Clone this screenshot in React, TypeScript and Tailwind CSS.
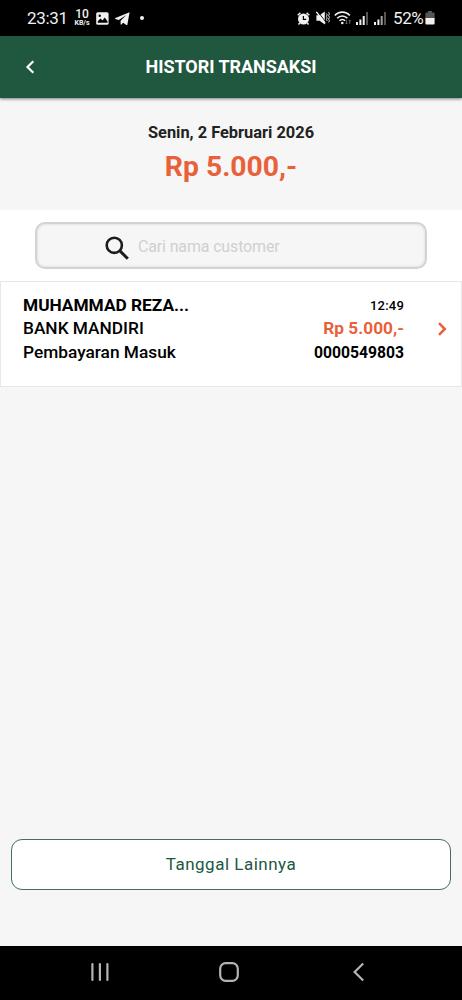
interface Transaction {
    name: string;
    bank: string;
    type: string;
    time: string;
    amount: string;
    reference: string;
}

const transactions: Transaction[] = [
    {
        name: "MUHAMMAD REZA...",
        bank: "BANK MANDIRI",
        type: "Pembayaran Masuk",
        time: "12:49",
        amount: "Rp 5.000,-",
        reference: "0000549803",
    },
];

function SignalIcon({ bars, className }: { bars: number; className?: string }) {
    return (
        <svg viewBox="0 0 12 13" className={className} fill="#f0f0f0">
            <rect x="0" y="10" width="2" height="3" />
            <rect x="3.4" y="7.5" width="2" height="5.5" />
            <rect x="6.7" y="4" width="2" height="9" fill={bars > 2 ? "#f0f0f0" : "#a0a0a0"} />
            <rect x="10" y="0" width="2" height="13" fill="#555" />
        </svg>
    );
}

function StatusBar() {
    return (
        <div className="flex h-9 shrink-0 items-center justify-between bg-black pl-[27px] pr-[27px] text-[#f0f0f0]">
            <div className="flex items-center">
                <span className="w-[47px] text-[17px] leading-none tracking-[-0.3px]">23:31</span>
                <div className="flex w-4 flex-col items-center font-medium">
                    <span className="text-[12px] leading-[11px]">10</span>
                    <span className="text-[7px] font-bold leading-[7px]">KB/s</span>
                </div>
                <svg viewBox="0 0 13 13" className="ml-1.5 h-[13px] w-[13px]">
                    <rect width="12.4" height="12.6" x="0.2" y="0.2" rx="1.6" fill="#f0f0f0" />
                    <path d="M1.8 9.3 4.5 6.6l2 2 2.2-3 2.8 3.7v1.4H1.8z" fill="#000" />
                    <circle cx="3.7" cy="3.7" r="1.2" fill="#000" />
                </svg>
                <svg viewBox="0 0 15 13" className="ml-1.5 h-[13px] w-[15px]" fill="#f0f0f0">
                    <path d="M14.6.3.4 6.1c-.5.2-.5.7 0 .9l3.4 1.1L11.3 3 5.6 8.8v3.4c0 .5.5.6.8.3l1.8-1.8 3.1 2.2c.5.3 1 .1 1.1-.5z" />
                </svg>
                <span className="ml-[10px] h-1 w-1 rounded-full bg-[#f0f0f0]" />
            </div>
            <div className="flex items-center">
                <svg viewBox="0 0 13 13" className="h-[13px] w-[13px]">
                    <circle cx="6.5" cy="7" r="5.5" fill="#f0f0f0" />
                    <path d="M.7 3.2 3.4.8M12.3 3.2 9.6.8M2.7 11 1.5 12.4M10.3 11l1.2 1.4" stroke="#f0f0f0" strokeWidth="1.5" />
                    <path d="M6.4 4v3.4h2.8" stroke="#000" strokeWidth="1.2" fill="none" />
                </svg>
                <svg viewBox="0 0 14 14" className="ml-1.5 h-[14px] w-[14px]">
                    <path d="M.4 4.200h3.200L8.800.6v12.800L3.600 9.800H.4z" fill="#f0f0f0" />
                    <path d="m1.400 .2 8.600 11" stroke="#000" strokeWidth="0.900" />
                    <path d="m.4.8 8.800 11.600" stroke="#f0f0f0" strokeWidth="1.400" />
                    <path d="M10.400 2.500l.8 1.400-.8 1.500.8 1.500-.8 1.500.8 1.500M12.600 1.200l.8 1.700-.8 1.700.8 1.700-.8 1.700.8 1.700-.8 1.700" stroke="#e0e0e0" strokeWidth="1" fill="none" />
                </svg>
                <svg viewBox="0 0 18 14" className="ml-1 h-[14px] w-[18px]" fill="none" stroke="#f0f0f0" strokeWidth="1.600">
                    <path d="M.8 4.600c4-4.600 11-4.600 15 0M3.200 7.300c2.800-3 7.400-3 10.200 0M5.500 9.800c1.600-1.700 4-1.700 5.600 0" />
                    <circle cx="8.300" cy="12" r="1.300" fill="#f0f0f0" stroke="none" />
                    <path d="M12.500 9v4M11.300 11.800l1.200 1.200 1.200-1.200M15.700 13V9M14.500 10.200 15.700 9l1.200 1.200" stroke="#777" strokeWidth="0.8" />
                </svg>
                <SignalIcon bars={3} className="ml-1 h-[13px] w-3" />
                <SignalIcon bars={2} className="ml-1.5 h-[13px] w-3" />
                <span className="ml-[7px] w-[32px] text-[17px] leading-none tracking-[-0.4px]">52%</span>
                <svg viewBox="0 0 10 14" className="h-[14px] w-[10px]">
                    <path d="M3 0h4v1.400h1.600q1 0 1 1V8H.4V2.400q0-1 1-1H3z" fill="#555" />
                    <path d="M.4 7h9.200v5.600q0 1-1 1H1.400q-1 0-1-1z" fill="#f0f0f0" />
                </svg>
            </div>
        </div>
    );
}

function Header() {
    return (
        <header className="z-10 grid h-[62px] shrink-0 grid-cols-[60px_1fr_60px] items-center bg-[#20573f] text-white shadow-[0_1px_3px_rgba(0,0,0,0.5)]">
            <button className="flex justify-center">
                <svg viewBox="0 0 10 14" className="h-[14px] w-[10px]" fill="none" stroke="currentColor" strokeWidth="2.200">
                    <path d="M8.300 1.200 2.500 7l5.800 5.800" />
                </svg>
            </button>
            <h1 className="text-center text-[18px] font-bold leading-6 tracking-[-0.05px]">HISTORI TRANSAKSI</h1>
        </header>
    );
}

function TransactionCard({ transaction }: { transaction: Transaction }) {
    return (
        <div className="flex h-[106px] border border-[#e8e8e8] bg-white pl-[22px] pt-3 text-black">
            <div className="flex-1 text-[17.300px] font-medium leading-[23.400px]">
                <p className="font-bold">{transaction.name}</p>
                <p>{transaction.bank}</p>
                <p>{transaction.type}</p>
            </div>
            <div className="text-right leading-[23.400px]">
                <p className="text-[13px] font-medium tracking-[0.2px]">{transaction.time}</p>
                <p className="text-[17.250px] font-bold text-[#e8613a]">{transaction.amount}</p>
                <p className="text-[15.700px] font-bold">{transaction.reference}</p>
            </div>
            <svg viewBox="0 0 10 14" className="ml-[33px] mr-[14px] mt-[28px] h-[14px] w-[10px]" fill="none" stroke="#e8613a" strokeWidth="2.500">
                <path d="M2 1.200 7.800 7 2 12.800" />
            </svg>
        </div>
    );
}

function NavigationBar() {
    return (
        <div className="flex h-[54px] shrink-0 items-center bg-black pb-[2px] pl-[90px] text-[#b4b4b4]">
            <svg viewBox="0 0 20 20" className="h-5 w-5" stroke="currentColor" strokeWidth="2.200" strokeLinecap="round">
                <path d="M2.400 2v16M9.900 2v16M17.400 2v16" />
            </svg>
            <svg viewBox="0 0 20 20" className="ml-[109px] h-5 w-5" fill="none" stroke="currentColor" strokeWidth="2.200">
                <rect x="1.200" y="1.200" width="17.600" height="17.600" rx="5.500" />
            </svg>
            <svg viewBox="0 0 12 20" className="ml-[113px] h-5 w-3" fill="none" stroke="currentColor" strokeWidth="2.200">
                <path d="M11.200 1.500 2.600 10l8.600 8.500" />
            </svg>
        </div>
    );
}

export default function App() {
    return (
        <div className="flex h-[1000px] w-[462px] flex-col overflow-hidden bg-[#f6f6f6] font-['Roboto',sans-serif]">
            <StatusBar />
            <Header />
            <section className="h-[112px] shrink-0 pt-[23px] text-center">
                <p className="text-[16.400px] font-bold leading-6 text-[#222]">Senin, 2 Februari 2026</p>
                <p className="text-[28.300px] font-bold leading-[43px] text-[#e8613a]">Rp 5.000,-</p>
            </section>
            <div className="h-[71px] shrink-0 bg-white px-[35px] pt-3">
                <label className="flex h-[47px] items-center rounded-[10px] border-2 border-[#d3d3d3] bg-[#f6f6f6] pl-[68px] shadow-[inset_0_0_3px_rgba(0,0,0,0.15)]">
                    <svg viewBox="0 0 24 24" className="mt-1 h-6 w-6 shrink-0" fill="none" stroke="#1c1c1c" strokeWidth="2.600">
                        <circle cx="9.300" cy="9.300" r="7.600" />
                        <path d="m14.800 14.800 8 8" strokeWidth="3" />
                    </svg>
                    <input
                        type="text"
                        placeholder="Cari nama customer"
                        className="ml-[9px] mt-0.5 w-60 bg-transparent text-[16px] tracking-[-0.15px] outline-none placeholder:text-[#d0d0d0]"
                    />
                </label>
            </div>
            <main className="flex-1">
                {transactions.map((transaction) => (
                    <TransactionCard key={transaction.reference} transaction={transaction} />
                ))}
            </main>
            <div className="shrink-0 px-[11px] pb-14">
                <button className="h-[51px] w-full rounded-[11px] border border-[#42705d] bg-white text-[17px] tracking-[0.5px] text-[#20573f]">
                    Tanggal Lainnya
                </button>
            </div>
            <NavigationBar />
        </div>
    );
}
